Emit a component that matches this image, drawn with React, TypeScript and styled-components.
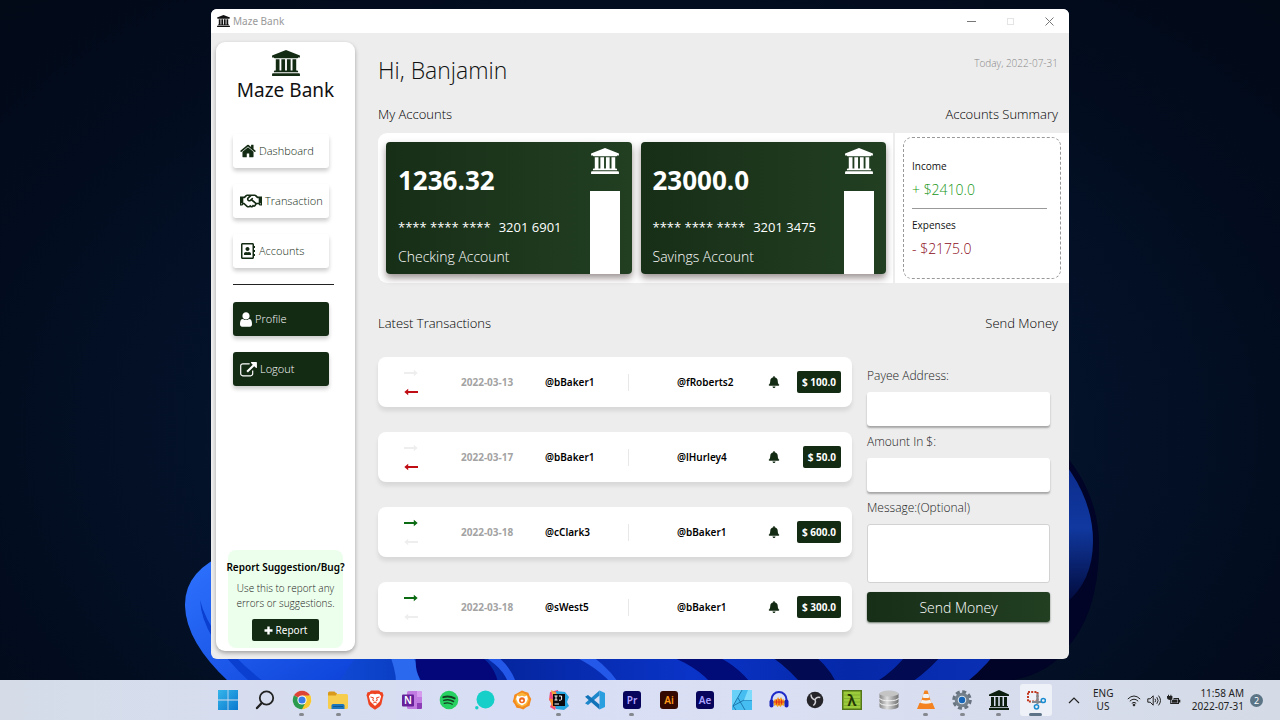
import React from "react";
import styled, { createGlobalStyle, css } from "styled-components";
import { FaRegHandshake, FaRegAddressBook, FaBell } from "react-icons/fa";

const ui = `"Noto Sans", "Open Sans", sans-serif`;
const display = `"Open Sans", "Noto Sans", sans-serif`;
const green = "#132a13";
const cardGreen = "linear-gradient(to right, #172e17, #223f22)";

const Global = createGlobalStyle`
  *, *::before, *::after { box-sizing: border-box; }
  body { margin: 0; font-family: ${ui}; color: #111; }
  h1, h2, h3, p, ul, dl, dd { margin: 0; padding: 0; }
  ul { list-style: none; }
  button { font-family: inherit; border: 0; padding: 0; background: none; cursor: pointer; }
  svg { display: block; }
`;

/* ---------- desktop ---------- */

const Desktop = styled.div`
  position: relative;
  display: flex;
  flex-direction: column;
  min-height: 100vh;
  background: radial-gradient(ellipse at 50% 60%, #061a40 0%, #04132c 42%, #020c1e 75%, #020917 100%);
  overflow: hidden;
`;

const Wallpaper = styled.svg`
  position: absolute;
  inset: 0;
  width: 100%;
  height: 100%;
`;

const Stage = styled.main`
  position: relative;
  flex: 1;
  display: flex;
  justify-content: center;
  padding: 9px 16px 21px;
`;

const Window = styled.section`
  display: flex;
  flex-direction: column;
  width: 100%;
  max-width: 858px;
  background: #ededed;
  border-radius: 6px;
  overflow: hidden;
`;

const TitleBar = styled.header`
  display: flex;
  align-items: center;
  height: 24px;
  padding-left: 6px;
  background: #fff;
`;

const WindowTitle = styled.span`
  flex: 1;
  margin-left: 3px;
  font-size: 10px;
  line-height: 16px;
  color: #999;
`;

const WindowButton = styled.button<{ $faint?: boolean }>`
  display: grid;
  place-items: center;
  width: 39px;
  height: 24px;
  color: ${(p) => (p.$faint ? "#e4e4e4" : "#777")};
`;

const Body = styled.div`
  flex: 1;
  display: flex;
  gap: 23px;
  padding: 9px 0 8px 5px;
`;

/* ---------- sidebar ---------- */

const Sidebar = styled.aside`
  display: flex;
  flex-direction: column;
  width: 139px;
  padding: 8px 12px 3px;
  background: #fff;
  border-radius: 9px;
  box-shadow: 0 2px 4px rgba(0, 0, 0, 0.32);
`;

const Brand = styled.div`
  display: flex;
  flex-direction: column;
  align-items: center;
  color: ${green};
`;

const BrandName = styled.span`
  margin-top: 1px;
  font-size: 19px;
  line-height: 26px;
  color: #111;
  white-space: nowrap;
`;

const Nav = styled.nav`
  display: flex;
  flex-direction: column;
  gap: 16px;
  padding: 31px 5px 0;
`;

const NavButton = styled.button<{ $solid?: boolean }>`
  display: flex;
  align-items: center;
  gap: 3px;
  width: 96px;
  height: 34px;
  padding-left: 7px;
  border-radius: 3px;
  font-size: 11px;
  line-height: 16px;
  white-space: nowrap;
  background: ${(p) => (p.$solid ? green : "#fff")};
  color: ${(p) => (p.$solid ? "#fff" : green)};
  box-shadow: 0 3px 4px rgba(0, 0, 0, 0.2);
`;

const NavText = styled.span`
  font-family: ${display};
  font-weight: 300;
`;

const NavRule = styled.hr`
  width: 101px;
  height: 1px;
  margin: 0 0 1px;
  border: 0;
  background: #222;
`;

const ReportBox = styled.section`
  display: flex;
  flex-direction: column;
  align-items: center;
  margin-top: auto;
  padding: 9px 0 7px;
  background: #ecffec;
  border-radius: 8px;
  text-align: center;
`;

const ReportTitle = styled.h3`
  font-size: 10px;
  line-height: 16px;
  font-weight: 600;
  white-space: nowrap;
  color: #000;
`;

const ReportText = styled.p`
  margin: 6px 0 8px;
  font-family: ${display};
  font-size: 10px;
  line-height: 15px;
  font-weight: 300;
  color: #222;
  white-space: nowrap;
`;

const ReportButton = styled.button`
  display: flex;
  align-items: center;
  justify-content: center;
  gap: 3px;
  width: 67px;
  height: 22px;
  border-radius: 2px;
  font-size: 10px;
  color: #fff;
  background: ${green};
`;

/* ---------- dashboard ---------- */

const Content = styled.div`
  flex: 1;
  display: flex;
  flex-direction: column;
  min-width: 0;
`;

const Row = styled.div<{ $top: number }>`
  display: flex;
  justify-content: space-between;
  align-items: flex-start;
  margin-top: ${(p) => p.$top}px;
  padding-right: 11px;
`;

const Greeting = styled.h1`
  font-family: ${display};
  font-weight: 300;
  font-size: 23px;
  line-height: 34px;
`;

const Today = styled.span`
  font-family: ${display};
  font-size: 10px;
  line-height: 20px;
  font-weight: 300;
  color: #888;
`;

const Heading = styled.h2`
  font-family: ${display};
  font-weight: 300;
  font-size: 13px;
  line-height: 20px;
  color: #000;
`;

const Accounts = styled.div`
  display: flex;
  margin-top: 9px;
  height: 150px;
  background: #fff;
  border-radius: 9px 0 0 9px;
`;

const Cards = styled.div`
  flex: 1;
  display: flex;
  gap: 9px;
  padding: 9px 7px 9px 8px;
  border-right: 2px solid #ededed;
`;

const Card = styled.article`
  flex: 1;
  display: flex;
  justify-content: space-between;
  padding: 0 12px;
  border-radius: 4px;
  color: #fff;
  background: ${cardGreen};
  box-shadow: 0 4px 7px rgba(60, 40, 40, 0.5);
`;

const CardInfo = styled.div`
  display: flex;
  flex-direction: column;
  font-family: ${display};
  white-space: nowrap;
`;

const Balance = styled.strong`
  margin-top: 21px;
  font-size: 26px;
  line-height: 34px;
`;

const CardNumber = styled.span`
  display: flex;
  gap: 8px;
  margin-top: 20px;
  font-size: 13px;
  line-height: 20px;
`;

const CardKind = styled.span`
  margin-top: 10px;
  font-size: 14px;
  line-height: 20px;
  font-weight: 300;
`;

const CardSide = styled.div`
  display: flex;
  flex-direction: column;
  align-items: center;
  width: 30px;
  padding-top: 6px;
`;

const CardStripe = styled.div`
  flex: 1;
  width: 100%;
  margin-top: 17px;
  background: #fff;
`;

const SummaryArea = styled.div`
  width: 174px;
  padding: 4px 8px;
`;

const Summary = styled.dl`
  height: 142px;
  padding: 19px 13px 0 8px;
  border: 1px dashed #999;
  border-radius: 9px;
  font-family: ${display};
`;

const SummaryLabel = styled.dt`
  font-size: 10px;
  line-height: 18px;
  font-weight: 400;
`;

const SummaryValue = styled.dd<{ $income?: boolean }>`
  margin-top: 6px;
  font-size: 14px;
  line-height: 18px;
  font-weight: 300;
  color: ${(p) => (p.$income ? "#149614" : "#8b0a18")};
  ${(p) =>
    p.$income &&
    css`
      padding-bottom: 9px;
      margin-bottom: 7px;
      border-bottom: 1px solid #999;
    `}
`;

const Lower = styled.div`
  display: flex;
  gap: 15px;
  margin-top: 24px;
  padding-right: 19px;
`;

const Transactions = styled.ul`
  flex: 1;
  display: flex;
  flex-direction: column;
  gap: 25px;
`;

const Transaction = styled.li`
  display: grid;
  grid-template-columns: 57px 84px 83px 49px 1fr 20px 53px;
  align-items: center;
  height: 50px;
  padding: 0 11px 0 26px;
  background: #fff;
  border-radius: 8px;
  box-shadow: 0 4px 4px rgba(0, 0, 0, 0.09);
  font-size: 10px;
  font-weight: 700;
  color: #000;
`;

const Arrows = styled.span`
  display: flex;
  flex-direction: column;
  gap: 9px;
`;

const TransactionDate = styled.time`
  color: #a3a3a3;
`;

const UserName = styled.span`
  font-weight: 600;
`;

const Divider = styled.span`
  width: 1px;
  height: 17px;
  background: #e8e8e8;
`;

const MessageButton = styled.button`
  justify-self: start;
  color: ${green};
`;

const Amount = styled.span`
  justify-self: end;
  padding: 0 5px;
  line-height: 22px;
  border-radius: 2px;
  color: #fff;
  background: ${green};
`;

const Form = styled.form`
  display: flex;
  flex-direction: column;
  width: 183px;
  padding-top: 9px;
`;

const fieldStyle = css`
  display: block;
  width: 100%;
  margin: 6px 0;
  border: 0;
  border-radius: 3px;
  background: #fff;
  font-family: ${display};
  font-size: 12px;
  padding: 0 8px;
  resize: none;
`;

const Label = styled.label`
  font-family: ${display};
  font-size: 12px;
  line-height: 20px;
  font-weight: 300;
  color: #222;
`;

const Input = styled.input`
  ${fieldStyle}
  height: 34px;
  box-shadow: 0 2px 2px rgba(0, 0, 0, 0.3);
`;

const Message = styled.textarea`
  ${fieldStyle}
  height: 59px;
  margin-bottom: 9px;
  border: 1px solid #d2d2d2;
`;

const SendButton = styled.button`
  height: 30px;
  border-radius: 3px;
  font-family: ${display};
  font-size: 14px;
  font-weight: 300;
  color: #fff;
  background: ${cardGreen};
  box-shadow: 0 1px 2px rgba(19, 42, 19, 0.6);
`;

/* ---------- taskbar ---------- */

const Taskbar = styled.footer`
  position: relative;
  display: flex;
  align-items: center;
  justify-content: flex-end;
  height: 40px;
  background: linear-gradient(to right, #d5dce8, #d8def5 40%, #dadff3 60%, #d4dbe6);
`;

const Apps = styled.div`
  flex: 0 1 844px;
  display: grid;
  grid-template-columns: repeat(23, 1fr);
  height: 100%;
`;

const AppButton = styled.button<{ $active?: boolean }>`
  display: flex;
  flex-direction: column;
  align-items: center;
  justify-self: center;
  align-self: center;
  width: 32px;
  height: 32px;
  padding-top: 6px;
  border-radius: 3px;
  background: ${(p) => (p.$active ? "#eef1f8" : "transparent")};
`;

const Marker = styled.span<{ $wide?: boolean }>`
  width: ${(p) => (p.$wide ? 13 : 5)}px;
  height: 3px;
  margin-top: 3px;
  border-radius: 2px;
  background: ${(p) => (p.$wide ? "#5d7488" : "#85898f")};
`;

const Tray = styled.div`
  display: flex;
  align-items: center;
  width: 226px;
  padding-left: 14px;
  color: #222;
  font-size: 10px;
  line-height: 13px;
`;

const Language = styled.span`
  width: 20px;
  margin: 0 14px 0 13px;
  text-align: center;
`;

const Status = styled.span`
  display: flex;
  gap: 6px;
`;

const Clock = styled.span`
  flex: 1;
  text-align: right;
  white-space: nowrap;
`;

const Count = styled.span`
  width: 13px;
  height: 13px;
  margin: 0 17px 0 6px;
  border-radius: 50%;
  background: #5b7486;
  color: #fff;
  font-size: 9px;
  text-align: center;
`;

/* ---------- icons ---------- */

const Bank = ({ size }: { size: number }) => (
  <svg width={size} height={Math.round(size * 0.93)} viewBox="0 0 1920 1792" fill="currentColor">
    <path d="M960 0l960 384v128h-128q0 26-20.5 45t-48.5 19h-1526q-28 0-48.5-19t-20.5-45h-128v-128zm-704 640h256v768h128v-768h256v768h128v-768h256v768h128v-768h256v768h59q28 0 48.5 19t20.5 45v64h-1664v-64q0-26 20.5-45t48.5-19h59v-768zm1595 960q28 0 48.5 19t20.5 45v128h-1920v-128q0-26 20.5-45t48.5-19h1782z" />
  </svg>
);

const Home = () => (
  <svg width="16" height="16" viewBox="64 64 1664 1664" fill="currentColor">
    <path d="M1472 992v480q0 26-19 45t-45 19h-384v-384h-256v384h-384q-26 0-45-19t-19-45v-480q0-1 .5-3t.5-3l575-474 575 474q1 2 1 6zm223-69l-62 74q-8 9-21 11h-3q-13 0-21-7l-692-577-692 577q-12 8-24 7-13-2-21-11l-62-74q-8-10-7-23.5t11-21.5l719-599q32-26 76-26t76 26l244 204v-195q0-14 9-23t23-9h192q14 0 23 9t9 23v408l219 182q10 8 11 21.5t-7 23.5z" />
  </svg>
);

const Person = () => (
  <svg width="12" height="15" viewBox="256 128 1280 1536" fill="currentColor">
    <path d="M1536 1399q0 109-62.5 187t-150.5 78h-854q-88 0-150.5-78t-62.5-187q0-85 8.5-160.5t31.5-152 58.5-131 94-89 134.5-34.5q131 128 313 128t313-128q76 0 134.5 34.5t94 89 58.5 131 31.5 152 8.5 160.5zm-256-887q0 159-112.5 271.5t-271.5 112.5-271.5-112.5-112.5-271.5 112.5-271.5 271.5-112.5 271.5 112.5 112.5 271.5z" />
  </svg>
);

const External = () => (
  <svg width="17" height="15" viewBox="0 0 1792 1600" fill="currentColor">
    <path d="M1408 928v320q0 119-84.5 203.5t-203.5 84.5h-832q-119 0-203.5-84.5t-84.5-203.5v-832q0-119 84.5-203.5t203.5-84.5h704q14 0 23 9t9 23v64q0 14-9 23t-23 9h-704q-66 0-113 47t-47 113v832q0 66 47 113t113 47h832q66 0 113-47t47-113v-320q0-14 9-23t23-9h64q14 0 23 9t9 23zm384-864v512q0 26-19 45t-45 19-45-19l-176-176-652 652q-10 10-23 10t-23-10l-114-114q-10-10-10-23t10-23l652-652-176-176q-19-19-19-45t19-45 45-19h512q26 0 45 19t19 45z" />
  </svg>
);

const Plus = () => (
  <svg width="9" height="9" viewBox="0 0 9 9" stroke="currentColor" strokeWidth="2.4">
    <path d="M4.5.5v8M.5 4.5h8" />
  </svg>
);

const Arrow = ({ left, color }: { left?: boolean; color: string }) => (
  <svg width="14" height="10" viewBox="0 0 14 10" fill={color}>
    {left ? <path d="M14 4H4.2V1.8L.3 5l3.9 3.2V6H14z" /> : <path d="M0 4h9.8V1.8L13.7 5 9.8 8.2V6H0z" />}
  </svg>
);

const glyphText = { fontFamily: "Noto Sans", fontWeight: 600, textAnchor: "middle" as const };

const Adobe = ({ bg, fg, name }: { bg: string; fg: string; name: string }) => (
  <>
    <rect x="1" y="1" width="18" height="18" rx="3" fill={bg} />
    <text x="10" y="13.5" fontSize="10" fill={fg} {...glyphText}>
      {name}
    </text>
  </>
);

type TaskbarApp = { name: string; open?: boolean; active?: boolean; art: React.ReactNode };

const apps: TaskbarApp[] = [
  {
    name: "Start",
    art: (
      <>
        <defs>
          <linearGradient id="win" x1="0" y1="0" x2="1" y2="1">
            <stop offset="0" stopColor="#35b5ea" />
            <stop offset="1" stopColor="#0a78cf" />
          </linearGradient>
        </defs>
        <path d="M0 0h9.6v9.6H0zM10.4 0H20v9.6h-9.6zM0 10.4h9.6V20H0zM10.4 10.4H20V20h-9.6z" fill="url(#win)" />
      </>
    ),
  },
  {
    name: "Search",
    art: (
      <g fill="none" stroke="#222" strokeLinecap="round">
        <circle cx="11.5" cy="8" r="6.7" strokeWidth="1.8" />
        <path d="M6.5 13.2L2 18" strokeWidth="2.4" />
      </g>
    ),
  },
  {
    name: "Chrome",
    open: true,
    art: (
      <>
        <circle cx="10" cy="10" r="9.3" fill="#fff" />
        <path d="M10 10L1.95 5.35A9.3 9.3 0 0 1 18.05 5.35z" fill="#dd4438" />
        <path d="M10 10L18.05 5.35A9.3 9.3 0 0 1 10 19.3z" fill="#f7c92f" />
        <path d="M10 10L13.6 12.6 10 19.3A9.3 9.3 0 0 1 1.95 5.35z" fill="#2c9a4c" />
        <path d="M10 5.4h8.1a9.3 9.3 0 0 1 .8 2L10 10z" fill="#f7c92f" />
        <circle cx="10" cy="10" r="4.6" fill="#fff" />
        <circle cx="10" cy="10" r="3.6" fill="#3a7ce8" />
      </>
    ),
  },
  {
    name: "File Explorer",
    open: true,
    art: (
      <>
        <path d="M0 3Q0 1.500 1.500 1.500h5L9 4H0z" fill="#d99a1c" />
        <path d="M0 4h18.500Q20 4 20 5.500v12Q20 19 18.500 19h-17Q0 19 0 17.500z" fill="#f7cd4e" />
        <path d="M0 3.500h7.500L9 2.800 8 5.500H0z" fill="#d99a1c" />
        <path d="M3.500 19v-3.500Q3.500 14 5 14h10q1.500 0 1.500 1.500V19z" fill="#1b76bd" />
        <path d="M5 16.500h10" stroke="#0d5690" />
      </>
    ),
  },
  {
    name: "Brave",
    art: (
      <>
        <path d="M6 .5h8l1.500 1.500 2 .2 1 3-.6 2-1.500 7-1.600 2.300L10 19.800l-4.800-3.300-1.600-2.300-1.500-7-.6-2 1-3 2-.2z" fill="#ee4423" />
        <path d="M5.500 4L8 3.700l2 .6 2-.6 2.500.3 1.600 2.300-1.400 5.200-2.100 2L10 16l-2.600-2.500-2.100-2-1.400-5.200z" fill="#fff" />
        <path d="M5.500 7l3 .8-.8 2.400 1.600.9M14.500 7l-3 .8.8 2.400-1.600.9M8.200 13l1.800-.9 1.800.9" fill="none" stroke="#ee4423" strokeWidth="1" />
      </>
    ),
  },
  {
    name: "OneNote",
    art: (
      <>
        <rect x="5" y="1" width="15" height="18" rx="1.500" fill="#c27be0" />
        <path d="M15 1h3.500Q20 1 20 2.500V7h-5z" fill="#d69bee" />
        <path d="M15 13h5v4.500q0 1.500-1.500 1.500H15z" fill="#8d3db5" />
        <rect x="0" y="4.500" width="12" height="12" rx="1" fill="#66209a" />
        <text x="6" y="14" fontSize="10" fill="#fff" {...glyphText}>N</text>
      </>
    ),
  },
  {
    name: "Spotify",
    art: (
      <>
        <circle cx="10" cy="10" r="9.300" fill="#26d061" />
        <g fill="none" stroke="#153d22" strokeLinecap="round">
          <path d="M4.300 7.200q6-1.800 11.400 1.200" strokeWidth="1.900" />
          <path d="M4.800 10.400q5.300-1.500 9.700 1.100" strokeWidth="1.500" />
          <path d="M5.200 13.300q4.300-1.200 8 1" strokeWidth="1.200" />
        </g>
      </>
    ),
  },
  {
    name: "Alexa",
    art: (
      <>
        <circle cx="10.500" cy="9.500" r="9" fill="#17cfc9" />
        <circle cx="1.800" cy="17.700" r="1.700" fill="#17cfc9" />
      </>
    ),
  },
  {
    name: "Bear browser",
    art: (
      <>
        <path d="M10 .5l3 1.200 3.300 1 1.200 3.300 1.800 3-1 3.200-.8 3.500-3.200 1.600-3 2.200-3.300-1.200-3.500-.6-1.600-3.200L.7 11.500l1-3.300.7-3.500L5.700 3z" fill="#f58a1f" />
        <path d="M10 2.500l5 2.500 2 5-2.500 5-4.500 2-5-2.500-2-5 2.500-5z" fill="#f9b53a" />
        <path d="M5 5.500l2.500 1 2.500-.8 2.500.8 2.500-1 .8 3.500-1.800 4-4 2.500-4-2.500L4.200 9z" fill="#fff" />
        <circle cx="10" cy="10.200" r="3" fill="#f1691f" />
        <circle cx="10" cy="10.600" r="1.200" fill="#fff" />
      </>
    ),
  },
  {
    name: "IntelliJ IDEA",
    open: true,
    art: (
      <>
        <path d="M1 2l8-2 1 10-4 10-5-3 2-4-3-3z" fill="#f0467f" />
        <path d="M7 1l9 1 4 5-2 5 2 4-5 4-8-1-2-8z" fill="#27a5df" />
        <path d="M0 8l5 2 1 8-3-2z" fill="#f98a2c" />
        <path d="M2 0l6 3-4 4z" fill="#f3a43b" />
        <rect x="4" y="4" width="12" height="12" fill="#0b0b0d" />
        <path d="M5.500 6h3M7 6v4M5.500 10h3M10 6h2.600v3.200q0 1-1.200 1H10M5.500 14h4.500" stroke="#fff" fill="none" />
      </>
    ),
  },
  {
    name: "Visual Studio Code",
    art: (
      <>
        <path d="M14.500.5L20 3v14l-5.500 2.500z" fill="#2a9fe0" />
        <path d="M14.500.5v5L3 15 0 13.200z" fill="#1d87cb" />
        <path d="M14.500 19.500v-5L3 5 0 6.800z" fill="#1273b8" />
      </>
    ),
  },
  { name: "Premiere Pro", open: true, art: <Adobe bg="#07045c" fg="#b3a6ff" name="Pr" /> },
  { name: "Illustrator", art: <Adobe bg="#330902" fg="#ff9a1a" name="Ai" /> },
  { name: "After Effects", art: <Adobe bg="#07045c" fg="#a9a2ff" name="Ae" /> },
  {
    name: "Affinity Designer",
    art: (
      <>
        <rect width="20" height="20" fill="#46bdf0" />
        <path d="M0 0h10L0 17z" fill="#69d0f7" />
        <path d="M10 0L1 16 4 20M6 8l7 12M1 16L12 10h8" fill="none" stroke="#1a72a8" strokeWidth=".9" />
        <path d="M12 10l4-10h4v10z" fill="#7edbfb" />
      </>
    ),
  },
  {
    name: "Audacity",
    art: (
      <>
        <path d="M2.500 13V9.500a7.500 7.500 0 0 1 15 0V13" fill="none" stroke="#1f2cc9" strokeWidth="2" />
        <path d="M4 12l2-3 1.500 1L9 7l1.500 2.500L12 7l1.500 3 1-1 2 3-2 4-1.500-1-1.500 2-1.500-1.500L8.500 17 7 15l-1.500 1z" fill="#f6a21c" />
        <path d="M5 12h10M7.500 9.500v5M10 9v6M12.500 9.500v5" stroke="#e4321b" strokeWidth="1.200" />
        <rect x=".5" y="9.500" width="4" height="8" rx="2" fill="#1b24b8" />
        <rect x="15.500" y="9.500" width="4" height="8" rx="2" fill="#1b24b8" />
      </>
    ),
  },
  {
    name: "OBS Studio",
    art: (
      <>
        <circle cx="10" cy="10" r="8.300" fill="#26262a" />
        <g fill="none" stroke="#d2d2d6" strokeWidth="1.500">
          <path d="M6 4.500q.2 4.300 4 5.300" />
          <path d="M15.300 7.500q-3.800-1.200-5.300 2.300" />
          <path d="M8.300 15.500q3.200-2.500 1.700-5.700" />
        </g>
      </>
    ),
  },
  {
    name: "Lambda",
    art: (
      <>
        <rect width="20" height="20" fill="#54761a" />
        <rect x="1.500" y="1.500" width="17" height="17" fill="#9ccb3b" />
        <path d="M1.500 5h17M1.500 8.500h17M1.500 12h17M1.500 15.500h17" stroke="#7ca92c" strokeWidth=".8" />
        <text x="10" y="16" fontSize="16" fill="#223606" {...glyphText}>λ</text>
      </>
    ),
  },
  {
    name: "Database",
    art: (
      <>
        <defs>
          <linearGradient id="db">
            <stop offset="0" stopColor="#858585" />
            <stop offset=".4" stopColor="#dedede" />
            <stop offset="1" stopColor="#707070" />
          </linearGradient>
        </defs>
        <path d="M.5 3.500v13c0 4 19 4 19 0v-13z" fill="url(#db)" />
        <ellipse cx="10" cy="3.500" rx="9.500" ry="3" fill="#c4c4c4" />
        <path d="M.5 8c0 3.700 19 3.700 19 0M.5 12.500c0 3.700 19 3.700 19 0" fill="none" stroke="#f4f4f4" />
      </>
    ),
  },
  {
    name: "VLC",
    open: true,
    art: (
      <>
        <path d="M3.500 13h13l2.500 6H1z" fill="#f58220" />
        <path d="M8.500.5h3L16 15q-6 2.500-12 0z" fill="#f38420" />
        <path d="M7.500 4h5l1 3.500q-3.500 1-7 0zM5.700 9.800q4.300 1.200 8.600 0l1 3.200q-5.300 1.600-10.600 0z" fill="#f3f3f3" />
      </>
    ),
  },
  {
    name: "Settings",
    open: true,
    art: (
      <>
        <circle cx="10" cy="10" r="8" fill="none" stroke="#68747f" strokeWidth="3.600" strokeDasharray="3.800 2.483" />
        <circle cx="10" cy="10" r="7.300" fill="#74808b" />
        <circle cx="10" cy="10" r="4.300" fill="#dbe5ee" />
        <circle cx="10" cy="10" r="3.200" fill="#1665b8" />
      </>
    ),
  },
  {
    name: "Maze Bank",
    open: true,
    art: (
      <path
        d="M10 0l10 4.500V6H0V4.500zM2 7h3v9H2zM6.500 7h2.700v9H6.500zM10.800 7h2.700v9h-2.700zM15 7h3v9h-3zM1 16h18v1.300H1zM0 18h20v2H0z"
        fill="#0c1f0f"
      />
    ),
  },
  {
    name: "Snipping Tool",
    open: true,
    active: true,
    art: (
      <>
        <rect x="2" y="2" width="9.500" height="9.500" fill="none" stroke="#c33a20" strokeWidth="2" strokeDasharray="2 1.200" />
        <path d="M11.500 3.500V14M6 12h9" stroke="#83898f" strokeWidth="2.200" />
        <circle cx="10.500" cy="16.800" r="2.100" fill="none" stroke="#1a8cd0" strokeWidth="1.500" />
        <circle cx="17.300" cy="10.500" r="2.100" fill="none" stroke="#1a8cd0" strokeWidth="1.500" />
      </>
    ),
  },
];

const transactions = [
  { date: "2022-03-13", from: "@bBaker1", to: "@fRoberts2", amount: "100.0", incoming: false },
  { date: "2022-03-17", from: "@bBaker1", to: "@lHurley4", amount: "50.0", incoming: false },
  { date: "2022-03-18", from: "@cClark3", to: "@bBaker1", amount: "600.0", incoming: true },
  { date: "2022-03-18", from: "@sWest5", to: "@bBaker1", amount: "300.0", incoming: true },
];

const cards = [
  { balance: "1236.32", number: "3201 6901", kind: "Checking Account" },
  { balance: "23000.0", number: "3201 3475", kind: "Savings Account" },
];

const Bloom = () => (
  <Wallpaper viewBox="0 0 1280 720" preserveAspectRatio="xMidYMax slice" aria-hidden="true">
    <defs>
      <linearGradient id="petalLeft" x1="0" y1="0" x2="1" y2="1">
        <stop offset="0" stopColor="#2f74ff" />
        <stop offset="1" stopColor="#0b3fd6" />
      </linearGradient>
      <linearGradient id="petalBase" x1="0" x2="1" y1="0" y2="0">
        <stop offset="0" stopColor="#1d5cf5" />
        <stop offset=".22" stopColor="#0a3fc4" />
        <stop offset=".36" stopColor="#0526a0" />
        <stop offset=".6" stopColor="#0a34c8" />
        <stop offset=".8" stopColor="#0528a8" />
        <stop offset="1" stopColor="#0a30b5" />
      </linearGradient>
      <linearGradient id="petalRight" x1="0" x2="0" y1="0" y2="1">
        <stop offset="0" stopColor="#0a2683" />
        <stop offset=".55" stopColor="#10389f" />
        <stop offset="1" stopColor="#020a3a" />
      </linearGradient>
    </defs>
    <path d="M1040 430q60 50 59 118t-34 102q-20 30-80 34H900z" fill="#010327" />
    <path d="M1040 436q53 50 53 105 0 40-27 62h-40z" fill="url(#petalRight)" />
    <path d="M225 640h780q-16 24-38 42H236z" fill="url(#petalBase)" />
    <path d="M230 552q-46 18-45 54t44 76h110l40-60z" fill="url(#petalLeft)" />
    <path d="M200 600q10 40 64 82h-14q-48-44-50-82z" fill="#0a3fd0" />
    <path d="M388 650q8 20 8 32h24q-2-22-12-32z" fill="#2b69ee" />
    <path d="M418 650q-6 18 4 32h76q-6-24-30-32z" fill="#03077a" />
    <path d="M470 650q30 12 38 32h8q-8-22-30-32zM560 650q34 14 50 32h8q-14-20-36-32z" fill="#2458e8" />
    <path d="M650 650q40 10 60 32h40q-20-24-50-32z" fill="#020c78" />
    <path d="M760 650q20 10 40 32h36q-10-20-30-32zM910 650q-14 20-34 32h36q20-14 34-32z" fill="#020b52" />
  </Wallpaper>
);

export default function App() {
  return (
    <Desktop>
      <Global />
      <Bloom />
      <Stage>
        <Window aria-label="Maze Bank">
          <TitleBar>
            <Bank size={13} />
            <WindowTitle>Maze Bank</WindowTitle>
            <WindowButton aria-label="Minimize">
              <svg width="9" height="9" stroke="currentColor"><path d="M0 4.500h9" /></svg>
            </WindowButton>
            <WindowButton aria-label="Maximize" $faint>
              <svg width="9" height="9" stroke="currentColor" fill="none"><rect x="1.500" y="1.500" width="6" height="6" /></svg>
            </WindowButton>
            <WindowButton aria-label="Close">
              <svg width="9" height="9" stroke="currentColor"><path d="M.5.5l8 8M8.500.5l-8 8" /></svg>
            </WindowButton>
          </TitleBar>
          <Body>
            <Sidebar>
              <Brand>
                <Bank size={28} />
                <BrandName>Maze Bank</BrandName>
              </Brand>
              <Nav>
                <NavButton><Home /><NavText>Dashboard</NavText></NavButton>
                <NavButton><FaRegHandshake size={22} /><NavText>Transaction</NavText></NavButton>
                <NavButton><FaRegAddressBook size={16} /><NavText>Accounts</NavText></NavButton>
                <NavRule />
                <NavButton $solid><Person /><NavText>Profile</NavText></NavButton>
                <NavButton $solid><External /><NavText>Logout</NavText></NavButton>
              </Nav>
              <ReportBox>
                <ReportTitle>Report Suggestion/Bug?</ReportTitle>
                <ReportText>
                  Use this to report any
                  <br />
                  errors or suggestions.
                </ReportText>
                <ReportButton><Plus />Report</ReportButton>
              </ReportBox>
            </Sidebar>
            <Content>
              <Row $top={11}>
                <Greeting>Hi, Banjamin</Greeting>
                <Today>Today, 2022-07-31</Today>
              </Row>
              <Row $top={17}>
                <Heading>My Accounts</Heading>
                <Heading>Accounts Summary</Heading>
              </Row>
              <Accounts>
                <Cards>
                  {cards.map((c) => (
                    <Card key={c.kind}>
                      <CardInfo>
                        <Balance>{c.balance}</Balance>
                        <CardNumber><span>**** **** ****</span><span>{c.number}</span></CardNumber>
                        <CardKind>{c.kind}</CardKind>
                      </CardInfo>
                      <CardSide>
                        <Bank size={28} />
                        <CardStripe />
                      </CardSide>
                    </Card>
                  ))}
                </Cards>
                <SummaryArea>
                  <Summary>
                    <SummaryLabel>Income</SummaryLabel>
                    <SummaryValue $income>+ $2410.0</SummaryValue>
                    <SummaryLabel>Expenses</SummaryLabel>
                    <SummaryValue>- $2175.0</SummaryValue>
                  </Summary>
                </SummaryArea>
              </Accounts>
              <Row $top={30}>
                <Heading>Latest Transactions</Heading>
                <Heading>Send Money</Heading>
              </Row>
              <Lower>
                <Transactions>
                  {transactions.map((t) => (
                    <Transaction key={t.date + t.from}>
                      <Arrows>
                        <Arrow color={t.incoming ? "#0b6b12" : "#eeeeee"} />
                        <Arrow left color={t.incoming ? "#eeeeee" : "#c00d14"} />
                      </Arrows>
                      <TransactionDate>{t.date}</TransactionDate>
                      <UserName>{t.from}</UserName>
                      <Divider />
                      <UserName>{t.to}</UserName>
                      <MessageButton aria-label="Show message"><FaBell size={12} /></MessageButton>
                      <Amount>$ {t.amount}</Amount>
                    </Transaction>
                  ))}
                </Transactions>
                <Form onSubmit={(e) => e.preventDefault()}>
                  <Label htmlFor="payee">Payee Address:</Label>
                  <Input id="payee" type="text" />
                  <Label htmlFor="amount">Amount In $:</Label>
                  <Input id="amount" type="text" />
                  <Label htmlFor="message">Message:(Optional)</Label>
                  <Message id="message" />
                  <SendButton type="submit">Send Money</SendButton>
                </Form>
              </Lower>
            </Content>
          </Body>
        </Window>
      </Stage>
      <Taskbar>
        <Apps>
          {apps.map((a) => (
            <AppButton key={a.name} aria-label={a.name} $active={a.active}>
              <svg width="20" height="20" viewBox="0 0 20 20">{a.art}</svg>
              {a.open && <Marker $wide={a.active} />}
            </AppButton>
          ))}
        </Apps>
        <Tray>
          <svg width="12" height="8" fill="none" stroke="currentColor" strokeWidth="1.200"><path d="M1 7l5-5 5 5" /></svg>
          <Language>ENG US</Language>
          <Status>
            <svg width="14" height="13" fill="none" stroke="currentColor">
              <path d="M.8 5q6.200-6 12.400 0M2.800 7.200q4.200-4 8.400 0M4.800 9.300q2.200-2 4.400 0" />
              <circle cx="7" cy="11" r=".9" fill="currentColor" />
            </svg>
            <svg width="14" height="13" fill="none" stroke="currentColor">
              <path d="M.8 4.800h2.400l3-3v9.400l-3-3H.8zM8 4.800q1.300 1.700 0 3.400M9.800 3.200q2.600 3.300 0 6.600M11.500 1.600q4 4.900 0 9.800" />
            </svg>
            <svg width="14" height="13" fill="currentColor">
              <path d="M0 2h1V.8h1V2h1.400V.8h1V2h1v2.200q0 1.400-1.200 1.800V9H11V5H6.500V4H12v1.800h1.300v2.600H12V10H3.200V6Q0 5.500 0 3.500z" />
              <path d="M6 5.500h4.500v3.200H4.800V6.500z" />
            </svg>
          </Status>
          <Clock>
            11:58 AM
            <br />
            2022-07-31
          </Clock>
          <Count>2</Count>
        </Tray>
      </Taskbar>
    </Desktop>
  );
}
